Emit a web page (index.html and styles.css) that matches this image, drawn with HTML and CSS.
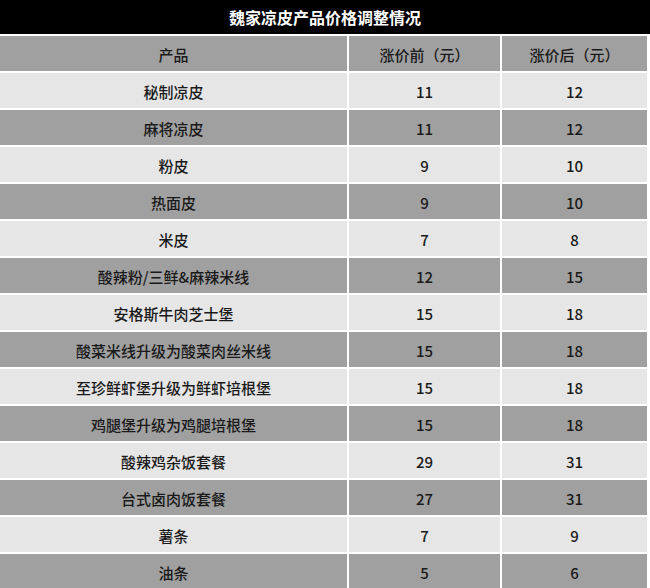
FILE: index.html
```html
<!DOCTYPE html>
<html lang="zh">
<head>
<meta charset="utf-8">
<title>魏家凉皮产品价格调整情况</title>
<link rel="stylesheet" href="styles.css">
</head>
<body>
<div class="sheet">
  <div class="title">魏家凉皮产品价格调整情况</div>
  <div class="grid">
    <div class="cell head">产品</div><div class="cell head">涨价前（元）</div><div class="cell head">涨价后（元）</div>
    <div class="cell light">秘制凉皮</div><div class="cell light num">11</div><div class="cell light num">12</div>
    <div class="cell dark">麻将凉皮</div><div class="cell dark num">11</div><div class="cell dark num">12</div>
    <div class="cell light">粉皮</div><div class="cell light num">9</div><div class="cell light num">10</div>
    <div class="cell dark">热面皮</div><div class="cell dark num">9</div><div class="cell dark num">10</div>
    <div class="cell light">米皮</div><div class="cell light num">7</div><div class="cell light num">8</div>
    <div class="cell dark">酸辣粉/三鲜&amp;麻辣米线</div><div class="cell dark num">12</div><div class="cell dark num">15</div>
    <div class="cell light">安格斯牛肉芝士堡</div><div class="cell light num">15</div><div class="cell light num">18</div>
    <div class="cell dark">酸菜米线升级为酸菜肉丝米线</div><div class="cell dark num">15</div><div class="cell dark num">18</div>
    <div class="cell light">至珍鲜虾堡升级为鲜虾培根堡</div><div class="cell light num">15</div><div class="cell light num">18</div>
    <div class="cell dark">鸡腿堡升级为鸡腿培根堡</div><div class="cell dark num">15</div><div class="cell dark num">18</div>
    <div class="cell light">酸辣鸡杂饭套餐</div><div class="cell light num">29</div><div class="cell light num">31</div>
    <div class="cell dark">台式卤肉饭套餐</div><div class="cell dark num">27</div><div class="cell dark num">31</div>
    <div class="cell light">薯条</div><div class="cell light num">7</div><div class="cell light num">9</div>
    <div class="cell dark">油条</div><div class="cell dark num">5</div><div class="cell dark num">6</div>
  </div>
</div>
</body>
</html>
```
FILE: styles.css
```css
html, body {
  margin: 0;
  padding: 0;
  background: #ffffff;
}
body {
  font-family: "Noto Sans CJK SC", "Noto Sans", "DejaVu Sans", sans-serif;
  color: #1a1a1a;
  width: 650px;
  height: 588px;
  overflow: hidden;
}
.sheet {
  width: 650px;
}
.title {
  height: 34px;
  background: #000000;
  color: #ffffff;
  font-size: 16px;
  font-weight: 700;
  display: flex;
  align-items: center;
  justify-content: center;
}
.grid {
  display: grid;
  grid-template-columns: 347px 151px 145px;
  grid-auto-rows: 35px;
  gap: 2px;
  padding-top: 2px;
  width: 647px;
}
.cell {
  display: flex;
  align-items: center;
  justify-content: center;
  font-size: 15px;
  font-weight: 500;
  line-height: 1;
  padding-top: 1px;
}
.head {
  background: #a0a0a0;
}
.dark {
  background: #a0a0a0;
}
.light {
  background: #e6e6e6;
}
.num {
  font-family: "Noto Sans CJK SC", "Noto Sans", sans-serif;
  font-size: 15px;
  font-weight: 500;
}
```
